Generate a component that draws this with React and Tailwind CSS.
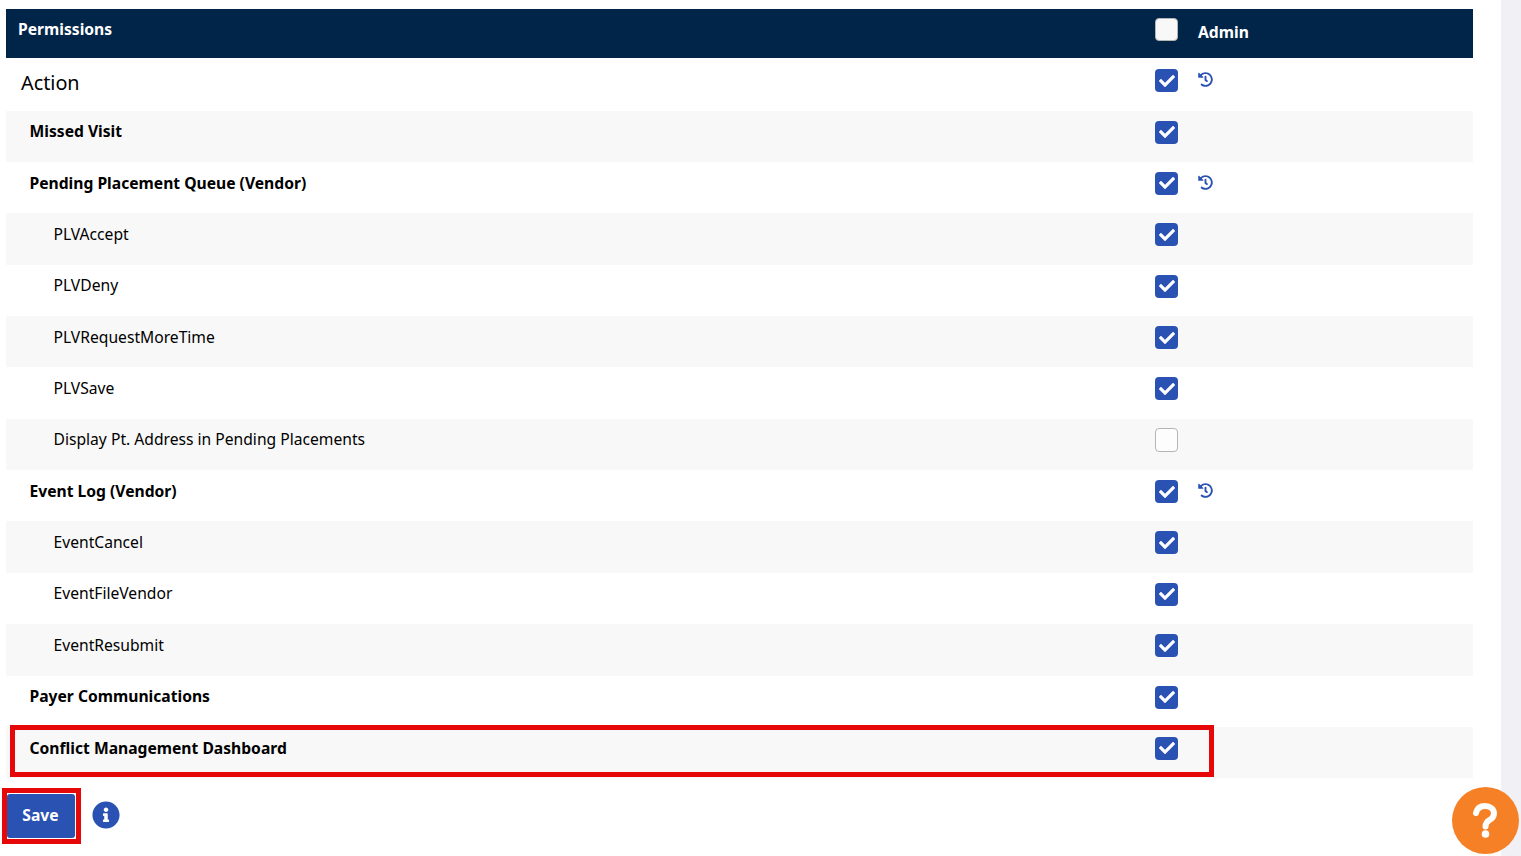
import { FaCheck, FaHistory, FaInfoCircle } from "react-icons/fa";

const rows = [
  { label: "Missed Visit", level: 1 },
  { label: "Pending Placement Queue (Vendor)", level: 1, history: true },
  { label: "PLVAccept", level: 2 },
  { label: "PLVDeny", level: 2 },
  { label: "PLVRequestMoreTime", level: 2 },
  { label: "PLVSave", level: 2 },
  { label: "Display Pt. Address in Pending Placements", level: 2, off: true },
  { label: "Event Log (Vendor)", level: 1, history: true },
  { label: "EventCancel", level: 2 },
  { label: "EventFileVendor", level: 2 },
  { label: "EventResubmit", level: 2 },
  { label: "Payer Communications", level: 1 },
  { label: "Conflict Management Dashboard", level: 1 },
];

const Box = ({ off }) =>
  off ? (
    <span className="-mt-px block h-[24px] w-[23px] rounded-[4px] border border-[#b5b5b5] bg-[#fdfdfd]" />
  ) : (
    <span className="flex h-[23px] w-[23px] items-center justify-center rounded-[4px] bg-[#2a52b2] text-white">
      <FaCheck size={16} />
    </span>
  );

const Row = ({ row, index }) => (
  <div className={`flex h-[51.37px] ${index % 2 === 0 ? "bg-[#f8f8f8]" : "bg-white"}`}>
    <div
      className={`w-[1149px] text-[15.65px] leading-6 text-black ${
        row.level === 1 ? "pl-[23.5px] pt-[8.6px] font-bold" : "pl-[47.5px] pt-[8.5px]"
      }`}
    >
      {row.label}
    </div>
    <div className="flex w-[43px] pt-[10px]">
      <Box off={row.off} />
    </div>
    {row.history && <FaHistory size={15} className="mt-[13px] text-[#2a52b2]" />}
  </div>
);

const App = () => {
  return (
    <main className="relative flex h-[856px] overflow-hidden bg-white font-['Noto_Sans',sans-serif]">
      <div className="w-[1501px] pl-[6px] pr-[28px] pt-[9px]">
        <div className="flex h-[49px] bg-[#002549] text-white">
          <div className="w-[1149px] pl-3 pt-[8.4px] text-[15.65px] font-bold leading-6">Permissions</div>
          <div className="w-[43px] pt-[9px]">
            <span className="block h-[23px] w-[23px] rounded-[4px] border border-[#b5b5b5] bg-[#f8f8f8]" />
          </div>
          <div className="pt-[11.4px] text-[15.65px] font-bold leading-6">Admin</div>
        </div>
        <div className="flex h-[52.6px] bg-white">
          <div className="w-[1149px] pl-[15px] pt-[10px] text-[19.8px] leading-[30px] text-black">Action</div>
          <div className="w-[43px] pt-[11px]">
            <Box />
          </div>
          <FaHistory size={15} className="mt-[14px] text-[#2a52b2]" />
        </div>
        {rows.map((row, i) => (
          <Row key={row.label} row={row} index={i} />
        ))}
        <div className="mt-[15.6px] flex items-center gap-[16.5px] pl-[1px]">
          <button className="h-[44px] w-[68px] rounded-[3px] bg-[#2a52b2] pb-[1px] pr-[1px] text-[15.65px] font-bold text-white">
            Save
          </button>
          <FaInfoCircle size={28} className="mb-[2px] text-[#2a52b2]" />
        </div>
      </div>
      <div className="flex-1 bg-[#f1f1f5]" />

      {/* annotation boxes */}
      <div className="absolute left-[10px] top-[725px] h-[52px] w-[1204px] border-[5px] border-[#e60808]" />
      <div className="absolute left-[2px] top-[788px] h-[56px] w-[79px] border-[5px] border-[#e60808]" />

      <button className="absolute left-[1452px] top-[787px] flex h-[67px] w-[67px] items-center justify-center rounded-full bg-[#f58025] pr-[1px]">
        <svg width="24" height="35" viewBox="0 0 24 35" fill="none">
          <path
            d="M3 10C4 5.5 7.5 3 12 3C17 3 21 6 21 10.5C21 14 19 15.5 16.5 17C14 18.5 12.5 20 12.5 23.5"
            stroke="white"
            strokeWidth="6"
            strokeLinecap="round"
          />
          <circle cx="12.5" cy="31" r="3.8" fill="white" />
        </svg>
      </button>
    </main>
  );
};

export default App;
